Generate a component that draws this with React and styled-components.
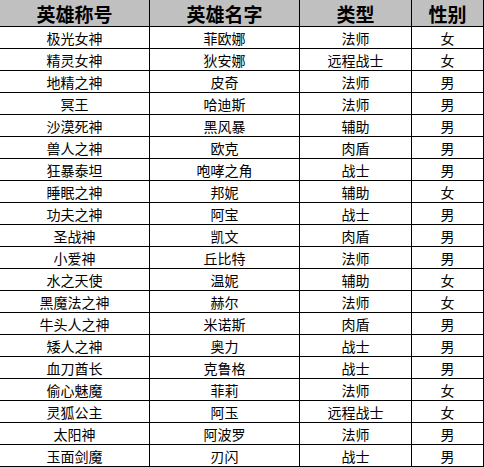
import React from "react";
import styled, { createGlobalStyle } from "styled-components";

const Global = createGlobalStyle`
  html, body { margin: 0; padding: 0; background: #fff; }
  body { font-family: "Noto Sans CJK SC", "Noto Sans", sans-serif; }
`;

const Table = styled.div`
  display: grid;
  grid-template-columns: 150px 150px 112px 72px;
  grid-template-rows: 27px;
  grid-auto-rows: 22px;
  width: 484px;
`;

const Cell = styled.div`
  display: flex;
  align-items: center;
  justify-content: center;
  box-sizing: border-box;
  border-right: 1px solid #000;
  border-bottom: 1px solid #000;
  background: ${(p) => (p.$head ? "#c0c0c0" : "#fff")};
  font-size: ${(p) => (p.$head ? "19px" : "14px")};
  font-weight: ${(p) => (p.$head ? 700 : 400)};
  color: #000;
  line-height: 1;
  white-space: nowrap;
  overflow: hidden;
`;

const HeadRow = styled.div`
  display: contents;
`;

const head = ["英雄称号", "英雄名字", "类型", "性别"];
const rows = [
  ["极光女神", "菲欧娜", "法师", "女"],
  ["精灵女神", "狄安娜", "远程战士", "女"],
  ["地精之神", "皮奇", "法师", "男"],
  ["冥王", "哈迪斯", "法师", "男"],
  ["沙漠死神", "黑风暴", "辅助", "男"],
  ["兽人之神", "欧克", "肉盾", "男"],
  ["狂暴泰坦", "咆哮之角", "战士", "男"],
  ["睡眠之神", "邦妮", "辅助", "女"],
  ["功夫之神", "阿宝", "战士", "男"],
  ["圣战神", "凯文", "肉盾", "男"],
  ["小爱神", "丘比特", "法师", "男"],
  ["水之天使", "温妮", "辅助", "女"],
  ["黑魔法之神", "赫尔", "法师", "女"],
  ["牛头人之神", "米诺斯", "肉盾", "男"],
  ["矮人之神", "奥力", "战士", "男"],
  ["血刀酋长", "克鲁格", "战士", "男"],
  ["偷心魅魔", "菲莉", "法师", "女"],
  ["灵狐公主", "阿玉", "远程战士", "女"],
  ["太阳神", "阿波罗", "法师", "男"],
  ["玉面剑魔", "刃闪", "战士", "男"],
];

export default function App() {
  return (
    <>
      <Global />
      <Table>
        <HeadRow>
          {head.map((h) => (
            <Cell key={h} $head>
              {h}
            </Cell>
          ))}
        </HeadRow>
        {rows.map((r, i) =>
          r.map((c, j) => <Cell key={i + "-" + j}>{c}</Cell>)
        )}
      </Table>
    </>
  );
}
